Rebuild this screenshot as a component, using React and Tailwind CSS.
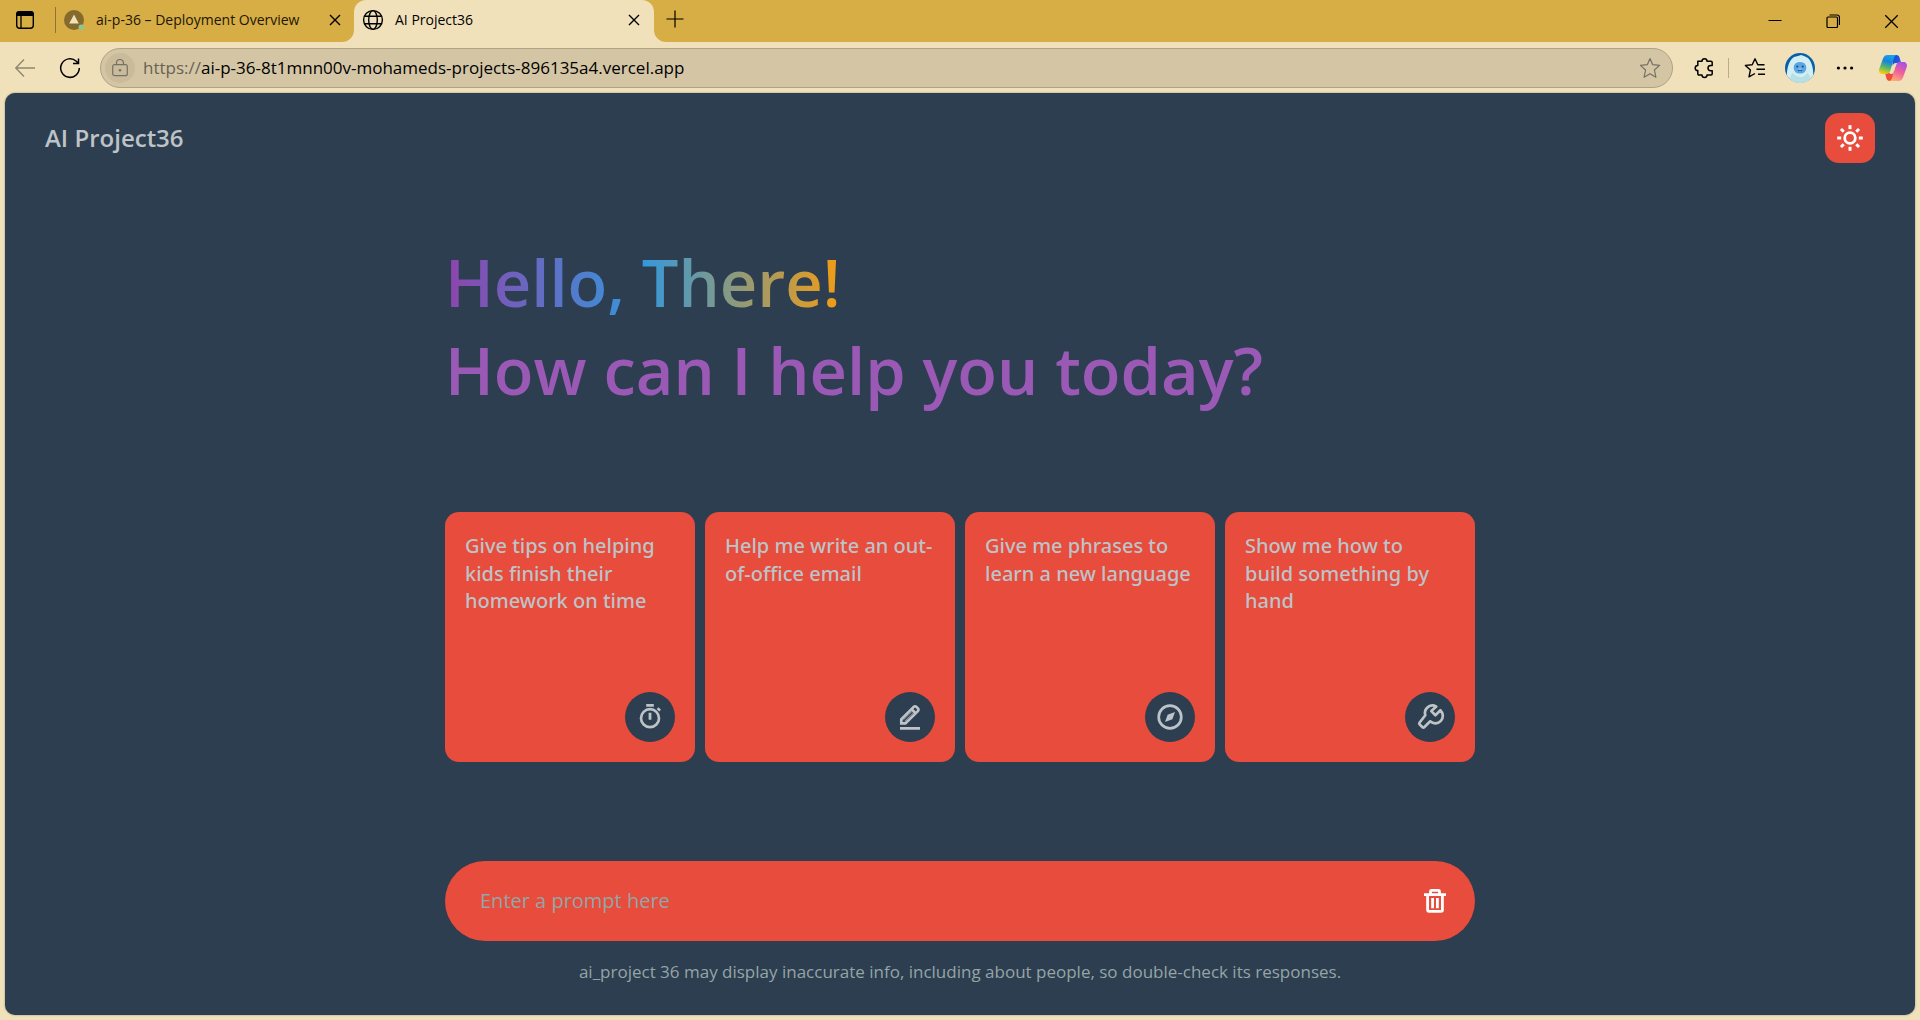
import React from "react";

function Svg({ size = 30, box = 30, children, className = "" }) {
  return (
    <svg width={size} height={size} viewBox={`0 0 ${box} ${box}`} fill="none" stroke="currentColor" className={`shrink-0 ${className}`} aria-hidden="true">
      {children}
    </svg>
  );
}

/* Page icons */
const SunIcon = () => (
  <Svg>
    <circle cx="15" cy="15" r="5.3" strokeWidth="2.8" />
    {[0, 45, 90, 135, 180, 225, 270, 315].map((a) => (
      <path key={a} d="M15 2.2v4" strokeWidth="3" transform={`rotate(${a} 15 15)`} />
    ))}
  </Svg>
);
const TimerIcon = () => (
  <Svg>
    <circle cx="15" cy="16.2" r="9" strokeWidth="2.7" />
    <path d="M11.2 3.4h7.6M15 10.8v7" strokeWidth="2.8" />
    <path d="M22.6 6.2l2.5 2.5" strokeWidth="2.6" />
  </Svg>
);
const PencilIcon = () => (
  <Svg>
    <path d="M6.3 21.4v-4L18.7 4.9a1.9 1.9 0 0 1 2.7 0l1.5 1.5a1.9 1.9 0 0 1 0 2.700L10.400 21.400Z" strokeWidth="2.7" />
    <path d="M16.600 7.100l4.100 4.100M9.200 18.600l9-9M5 26.300h20" strokeWidth="2.7" />
    <path d="M9 18.800l8.600-8.600" stroke="#2c3e50" strokeWidth="1.500" />
  </Svg>
);
const CompassIcon = () => (
  <Svg>
    <circle cx="15" cy="15" r="11.3" strokeWidth="2.7" />
    <path d="M20 10l-2.600 7.300L10 20l2.600-7.300Z" fill="currentColor" stroke="none" />
  </Svg>
);
const WrenchIcon = () => (
  <Svg>
    <path
      d="M21.300 4.600a7.500 7.500 0 0 0-11 8.600L4.500 20.800a1.200 1.200 0 0 0 .1 1.600l2.900 2.900a1.200 1.200 0 0 0 1.700 0l6-6a7.500 7.500 0 0 0 10.200-11.100l-5 5-4.100-4.100Z"
      strokeWidth="2.7"
      strokeLinejoin="round"
    />
  </Svg>
);
const TrashIcon = () => (
  <Svg>
    <path d="M4 8.700h22M10.500 8.700V5.400a1 1 0 0 1 1-1h7a1 1 0 0 1 1 1v3.300M7.600 9v15a1.300 1.300 0 0 0 1.300 1.300h12.200a1.300 1.300 0 0 0 1.300-1.300V9M12.600 12v10.200M17.400 12v10.200" strokeWidth="2.8" />
  </Svg>
);

/* Browser icons */
const TabsIcon = () => (
  <Svg size={20} box={20} className="text-black">
    <rect x="1.7" y="1.7" width="16.6" height="16.6" rx="3" strokeWidth="1.4" />
    <path d="M1.2 6V4a3 3 0 0 1 3-3h11.6a3 3 0 0 1 3 3v2Z" fill="currentColor" stroke="none" />
    <path d="M6 6v12" strokeWidth="1.3" />
  </Svg>
);
const TriangleFavicon = () => (
  <Svg size={22} box={22}>
    <circle cx="11" cy="11" r="10" fill="#856a2e" stroke="none" />
    <path d="M11 5.5l4.8 9H6.2Z" fill="#f0e1bb" stroke="none" />
    <circle cx="18.3" cy="18.3" r="2.7" fill="#8dc78a" stroke="none" />
  </Svg>
);
const CloseIcon = ({ size = 12 }) => (
  <Svg size={size} box={12}>
    <path d="M1 1l10 10M11 1L1 11" strokeWidth={size > 12 ? 1 : 1.4} />
  </Svg>
);
const GlobeIcon = () => (
  <Svg size={22} box={22}>
    <circle cx="11" cy="11" r="9.4" strokeWidth="1.4" />
    <ellipse cx="11" cy="11" rx="4.3" ry="9.4" strokeWidth="1.4" />
    <path d="M2.5 7.3h17M2.5 14.7h17" strokeWidth="1.4" />
  </Svg>
);
const PlusIcon = () => (
  <Svg size={18} box={18}>
    <path d="M9 .5v17M.5 9h17" strokeWidth="1.2" />
  </Svg>
);
const BackIcon = () => (
  <Svg size={22} box={22} className="text-[#90866f]">
    <path d="M10 2.5L1.8 11l8.2 8.5M2 11h19" strokeWidth="1.4" />
  </Svg>
);
const ReloadIcon = () => (
  <Svg size={22} box={22} className="text-black">
    <path d="M20.3 11a9.3 9.3 0 1 1-3-6.800l2 2M19.500 1.500v5h-5.500" strokeWidth="1.500" />
  </Svg>
);
const LockIcon = () => (
  <Svg size={18} box={18} className="text-[#757166]">
    <rect x="1.7" y="5.7" width="14.6" height="11" rx="2" strokeWidth="1.2" />
    <path d="M5.5 5.7V4a3.5 3.5 0 0 1 7 0v1.7" strokeWidth="1.2" />
    <circle cx="9" cy="11.2" r="1.3" fill="currentColor" stroke="none" />
  </Svg>
);
const StarIcon = () => (
  <Svg size={22} box={22} className="text-[#757166]">
    <path d="M11 1.5l2.7 6.2 6.9.7-5.2 4.6 1.5 7.2L11 16.7l-5.9 3.5 1.5-7.2-5.2-4.6 6.900-.7Z" strokeWidth="1.2" strokeLinejoin="round" />
  </Svg>
);
const PuzzleIcon = () => (
  <Svg size={22} box={22}>
    <path
      d="M4.8 4.2H9a2.5 2.5 0 0 1 5 0h4a1.2 1.2 0 0 1 1.2 1.2v3h-1.500a2.700 2.700 0 0 0 0 5.400h1.500v3a1.200 1.200 0 0 1-1.200 1.200h-4a2.500 2.500 0 0 1-5 0H6a1.200 1.200 0 0 1-1.200-1.200v-3.200a2.600 2.600 0 0 1 0-5.200Z"
      strokeWidth="1.5"
      strokeLinejoin="round"
    />
  </Svg>
);
const FavoritesIcon = () => (
  <Svg size={22} box={22}>
    <path d="M20.500 7.800h-6.700L11 1.800 8.200 7.700l-6.800.7 5 4.700-1.400 6.700 6-3.300M12.500 12.200H21M14 17.200h7" strokeWidth="1.4" strokeLinejoin="round" />
  </Svg>
);
const DotsIcon = () => (
  <Svg size={18} box={18}>
    <g fill="currentColor" stroke="none">
      <circle cx="2.4" cy="9" r="1.6" />
      <circle cx="9" cy="9" r="1.6" />
      <circle cx="15.6" cy="9" r="1.6" />
    </g>
  </Svg>
);
const AvatarIcon = () => (
  <Svg size={30} box={30}>
    <clipPath id="avatarClip"><circle cx="15" cy="15" r="15" /></clipPath>
    <g clipPath="url(#avatarClip)" stroke="none">
      <rect width="30" height="30" fill="#075fa9" />
      <path d="M2 30C1 18 3 8 9 4l4-1 3-1 3 1 4 2c5 5 6 14 5 25Z" fill="#d3eef2" />
      <path d="M5 30c0-6 1-9 3-10 3 5 11 6 14 0 3 2 4 5 4 10Z" fill="#b5e0e5" />
      <rect x="8.7" y="9" width="12.6" height="11.5" rx="5.5" fill="#5aa5e2" />
      <circle cx="12.3" cy="13.5" r="1" fill="#124b8b" />
      <circle cx="17.7" cy="13.5" r="1" fill="#124b8b" />
      <path d="M13 17.8q2-1.8 4 0" stroke="#124b8b" strokeWidth="1" fill="none" />
      <path d="M13.5 15.2h3v1.6h-3Z" fill="#8fcbef" />
    </g>
  </Svg>
);
const CopilotIcon = () => (
  <Svg size={30} box={30}>
    <defs>
      <linearGradient id="cpLeft" x1=".6" y1="0" x2=".3" y2="1">
        <stop offset="0" stopColor="#15a4e9" />
        <stop offset=".35" stopColor="#1883dc" />
        <stop offset=".65" stopColor="#55b56b" />
        <stop offset="1" stopColor="#f6cf12" />
      </linearGradient>
      <linearGradient id="cpRight" x1=".7" y1="0" x2=".3" y2="1">
        <stop offset="0" stopColor="#a850e8" />
        <stop offset=".5" stopColor="#f0609a" />
        <stop offset="1" stopColor="#ffad72" />
      </linearGradient>
      <linearGradient id="cpTop" x1="0" y1="0" x2="1" y2="1">
        <stop offset="0" stopColor="#1b45d6" />
        <stop offset="1" stopColor="#2269df" />
      </linearGradient>
    </defs>
    <g stroke="none">
      <path d="M15 2h3.500c1.500 0 2.500 1 3 2.500L23.200 10h-4.700c-2 0-3.300 1-4 3Z" fill="url(#cpTop)" />
      <path d="M7 20h6l3-3-1 8c-.500 2-1.500 3-3 3h-.500c-1.500 0-2.500-1-3-2.500Z" fill="#ef4c39" />
      <path d="M9.500 2H19c-1.500 0-2.400 1-3 3l-3.500 12c-.600 2.500-2 4-4.500 4H4.500C2 21 .500 19 1.200 16L5 5.500C6 3 7.300 2 9.500 2Z" fill="url(#cpLeft)" />
      <path d="M20.500 28H11c1.500 0 2.400-1 3-3l3.500-12c.600-2.500 2-4 4.500-4h3.500c2.500 0 4 2 3.300 5L25 24.500c-1 2.500-2.300 3.500-4.500 3.500Z" fill="url(#cpRight)" />
      <path d="M16.300 10.500h3.200c-1 .7-1.700 1.800-2 3L15.600 19c-.4 1.200-1 2-2 2h-2.200c1-.8 1.600-1.800 2-3Z" fill="#f0e1bb" />
    </g>
  </Svg>
);

const suggestions = [
  { text: "Give tips on helping kids finish their homework on time", Icon: TimerIcon },
  { text: "Help me write an out-of-office email", Icon: PencilIcon },
  { text: "Give me phrases to learn a new language", Icon: CompassIcon },
  { text: "Show me how to build something by hand", Icon: WrenchIcon },
];

function TabStrip() {
  return (
    <div className="flex h-[42px] shrink-0 text-sm text-black">
      <div className="flex w-[354px] items-center rounded-br-xl bg-[#d7ad45] pb-[2px]">
        <button aria-label="Tab actions" className="ml-[15px]"><TabsIcon /></button>
        <span className="ml-5 h-[26px] w-px bg-[#8f732e]" />
        <button className="ml-[7px] flex items-center gap-[11px] text-[#1c1706]">
          <TriangleFavicon />
          <span className="whitespace-nowrap">ai-p-36 – Deployment Overview</span>
        </button>
        <button aria-label="Close ai-p-36 tab" className="mr-[13px] ml-auto"><CloseIcon /></button>
      </div>
      <div className="w-[300px] bg-[linear-gradient(#d7ad45_50%,#f0e1bb_50%)]">
        <div className="flex h-full items-center rounded-t-xl bg-[#f0e1bb] pr-[14px] pb-[2px] pl-2">
          <button className="flex items-center gap-[11px]">
            <GlobeIcon />
            <span>AI Project36</span>
          </button>
          <button aria-label="Close AI Project36 tab" className="ml-auto"><CloseIcon /></button>
        </div>
      </div>
      <div className="flex flex-1 items-center rounded-bl-xl bg-[#d7ad45]">
        <button aria-label="New tab" className="ml-3 pb-1"><PlusIcon /></button>
        <div className="ml-auto flex h-full">
          <button aria-label="Minimize" className="grid w-[58px] place-items-center">
            <Svg size={14} box={14}><path d="M.5 6.500h13" strokeWidth="1" /></Svg>
          </button>
          <button aria-label="Restore" className="grid w-[58px] place-items-center">
            <Svg size={14} box={14}>
              <rect x="1" y="3" width="10.5" height="10.5" rx="1" strokeWidth="1.2" />
              <path d="M3.5 1H11a2.5 2.5 0 0 1 2.500 2.500V11" strokeWidth="1.2" />
            </Svg>
          </button>
          <button aria-label="Close window" className="grid w-[58px] place-items-center"><CloseIcon size={15} /></button>
        </div>
      </div>
    </div>
  );
}

function Toolbar() {
  return (
    <div className="flex h-[51px] shrink-0 items-center text-black">
      <button aria-label="Back" className="ml-[14px]"><BackIcon /></button>
      <button aria-label="Reload" className="ml-[23px]"><ReloadIcon /></button>
      <div className="ml-[19px] flex h-10 flex-1 items-center rounded-full border border-[#aea383] bg-[#d4c6a5] pr-[11px] pl-1">
        <button aria-label="Site information" className="grid size-[30px] place-items-center rounded-full bg-[#cabb9b]"><LockIcon /></button>
        <label htmlFor="address" className="ml-2 text-[17px] text-[#686253]">https://</label>
        <input
          id="address"
          className="min-w-0 flex-1 bg-transparent text-[17px] text-black outline-none"
          defaultValue="ai-p-36-8t1mnn00v-mohameds-projects-896135a4.vercel.app"
        />
        <button aria-label="Add to favorites"><StarIcon /></button>
      </div>
      <button aria-label="Extensions" className="ml-5"><PuzzleIcon /></button>
      <span className="ml-[13px] h-5 w-px bg-[#b8ac8d]" />
      <button aria-label="Favorites" className="ml-[15px]"><FavoritesIcon /></button>
      <button aria-label="Profile" className="ml-[19px]"><AvatarIcon /></button>
      <button aria-label="Settings and more" className="ml-[21px]"><DotsIcon /></button>
      <button aria-label="Copilot" className="mr-3 ml-6"><CopilotIcon /></button>
    </div>
  );
}

export default function App() {
  return (
    <div className="flex min-h-screen flex-col bg-[#f0e1bb] font-['Open_Sans','Noto_Sans',sans-serif]">
      <TabStrip />
      <Toolbar />
      <div className="mx-[5px] mb-[5px] flex flex-1 flex-col rounded-[10px] bg-[#2c3e50] text-[#bdc3c7] shadow-[0_0_2px_#8a8064]">
        <header className="flex items-center justify-between px-10 py-5">
          <a href="#home" className="text-2xl font-semibold">AI Project36</a>
          <button aria-label="Switch theme" className="grid size-[50px] place-items-center rounded-[14px] bg-[#e74c3c] text-white">
            <SunIcon />
          </button>
        </header>
        <main className="mx-auto mt-[55px] w-full max-w-[1030px]">
          <h1 className="text-[65px] leading-[88px] font-semibold">
            <span className="block w-fit bg-[linear-gradient(to_right,#8e44ad,#3498db,#f39c12)] bg-clip-text text-transparent">Hello, There!</span>
            <span className="block text-[#9b59b6]">How can I help you today?</span>
          </h1>
          <div className="mt-[98px] grid grid-cols-4 gap-[10px]">
            {suggestions.map(({ text, Icon }) => (
              <button key={text} className="flex h-[250px] flex-col justify-between rounded-[14px] bg-[#e74c3c] p-5 text-left">
                <span className="font-['Noto_Sans',sans-serif] text-xl leading-snug font-medium">{text}</span>
                <span className="grid size-[50px] place-items-center self-end rounded-full bg-[#2c3e50]"><Icon /></span>
              </button>
            ))}
          </div>
        </main>
        <footer className="mx-auto mt-auto w-full max-w-[1030px] pb-[30px]">
          <form className="flex h-20 items-center rounded-full bg-[#e74c3c] pr-[25px] pl-[35px]" onSubmit={(e) => e.preventDefault()}>
            <input
              aria-label="Prompt"
              placeholder="Enter a prompt here"
              className="min-w-0 flex-1 bg-transparent text-xl outline-none placeholder:text-[#95a5a6]"
            />
            <button type="button" aria-label="Clear chat" className="text-white"><TrashIcon /></button>
          </form>
          <p className="mt-[18px] text-center text-[17px] leading-[26px] text-[#95a5a6]">
            ai_project 36 may display inaccurate info, including about people, so double-check its responses.
          </p>
        </footer>
      </div>
    </div>
  );
}
